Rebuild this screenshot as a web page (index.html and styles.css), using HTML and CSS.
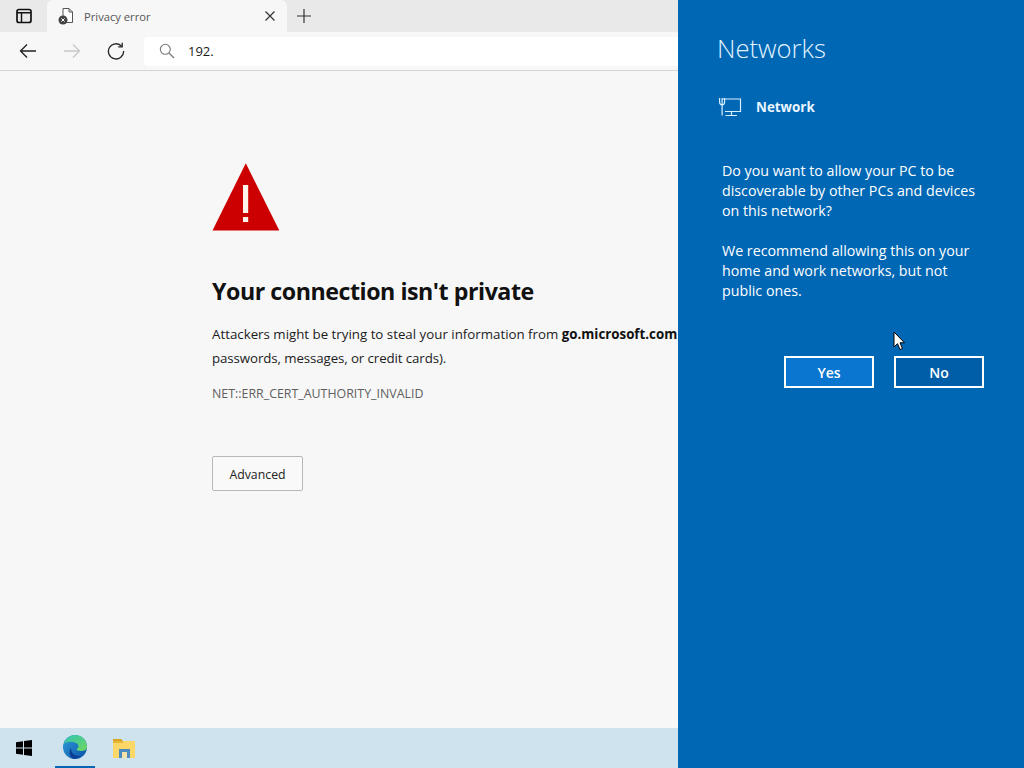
FILE: index.html
```html
<!DOCTYPE html>
<html lang="en">
<head>
<meta charset="utf-8">
<title>Privacy error</title>
<link rel="stylesheet" href="styles.css">
</head>
<body>
<div class="screen">
  <div class="browser">
    <div class="tabstrip">
      <div class="tab-actions">
        <svg class="ico" width="16" height="16" viewBox="0 0 16 16"><rect x="1" y="1.500" width="14" height="13" rx="2" fill="none" stroke="#111" stroke-width="1.700"/><path d="M1 4.800H15M5.500 4.800V14.500" stroke="#111" stroke-width="1.400" fill="none"/></svg>
      </div>
      <div class="tab">
        <svg class="favicon" width="16" height="18" viewBox="0 0 16 18"><path d="M5 1.500H11L14.500 5V15.500H5Z" fill="#fff" stroke="#555" stroke-width="1"/><path d="M11 1.500V5H14.500" fill="none" stroke="#555"/><circle cx="5" cy="13" r="4.500" fill="#444"/><path d="M3.400 11.400L6.600 14.600M6.600 11.400L3.400 14.600" stroke="#fff" stroke-width="1"/></svg>
        <span class="tab-title">Privacy error</span>
        <svg class="tab-close" width="10" height="10" viewBox="0 0 10 10"><path d="M0.500 0.500L9.500 9.500M9.500 0.500L0.500 9.500" stroke="#333" stroke-width="1.200"/></svg>
      </div>
      <svg class="newtab" width="16" height="16" viewBox="0 0 16 16"><path d="M8 1V15M1 8H15" stroke="#333" stroke-width="1.200"/></svg>
    </div>
    <div class="toolbar">
      <svg class="nav-back" width="18" height="16" viewBox="0 0 18 16"><path d="M17 8H1.500M8 1.500L1.500 8L8 14.500" fill="none" stroke="#222" stroke-width="1.300"/></svg>
      <svg class="nav-forward" width="18" height="16" viewBox="0 0 18 16"><path d="M1 8H16.500M10 1.500L16.500 8L10 14.500" fill="none" stroke="#c8c8c8" stroke-width="1.300"/></svg>
      <svg class="nav-reload" width="18" height="18" viewBox="0 0 18 18"><path d="M14.600 4.200A7.600 7.600 0 1 0 16.600 9" fill="none" stroke="#222" stroke-width="1.300"/><path d="M15.200 0.800V4.800H11.200" fill="none" stroke="#222" stroke-width="1.300"/></svg>
      <div class="address">
        <svg class="search" width="16" height="16" viewBox="0 0 16 16"><circle cx="6.300" cy="6.300" r="5" fill="none" stroke="#777" stroke-width="1.100"/><path d="M10 10L15 15" stroke="#777" stroke-width="1.200"/></svg>
        <span class="url">192.</span>
      </div>
    </div>
    <main class="content">
      <svg class="warn" width="68" height="68" viewBox="0 0 68 68"><path d="M33.800 0.300L67.300 67.500H0.500Z" fill="#cc0000"/><rect x="31" y="22" width="5.200" height="28" fill="#fff4ec"/><rect x="31" y="54" width="5.200" height="5" fill="#fff4ec"/></svg>
      <h1 class="heading">Your connection isn't private</h1>
      <p class="message">Attackers might be trying to steal your information from <b>go.microsoft.com</b><br><span class="message-tail">passwords, messages, or credit cards).</span></p>
      <p class="code">NET::ERR_CERT_AUTHORITY_INVALID</p>
      <button class="advanced">Advanced</button>
    </main>
    <div class="taskbar">
      <svg class="win" width="16" height="16" viewBox="0 0 16 16"><path d="M0 2.200L7 1.200V7.500H0ZM8 1L16 0V7.500H8ZM0 8.500H7V14.800L0 13.800ZM8 8.500H16V16L8 15Z" fill="#000"/></svg>
      <div class="task-item active">
        <svg width="26" height="26" viewBox="0 0 26 26"><defs><linearGradient id="eg" x1="0" y1="0" x2="1" y2="1"><stop offset="0" stop-color="#2f9fd8"/><stop offset="1" stop-color="#0b4fa8"/></linearGradient><linearGradient id="eg2" x1="0" y1="0" x2="1" y2="1"><stop offset="0" stop-color="#2fc4b0"/><stop offset="1" stop-color="#70d860"/></linearGradient></defs><circle cx="13" cy="13" r="12" fill="url(#eg)"/><path d="M2 10C4 3 10 1 13 1C20 1 25 6.500 25 13C25 16 22 17 19 17C16 17 14.500 16 14.500 15C17 14 17 11 15 9.500C11 7 5 7 2 10Z" fill="url(#eg2)"/><path d="M9 14C9 20 14 23 19 21.500C17 24 14 25 12 25C8 24 6 18 9 14Z" fill="#0a3f94"/></svg>
      </div>
      <div class="task-item">
        <svg width="24" height="20" viewBox="0 0 24 20"><path d="M1 1H9L11 3H1Z" fill="#d8a420"/><rect x="1" y="3" width="22" height="17" fill="#fbd768"/><rect x="1" y="3" width="10" height="2" fill="#e6b63a"/><rect x="7" y="11" width="11" height="9" fill="#4a8cc0"/><rect x="10" y="14" width="5" height="6" fill="#f3e3a8"/></svg>
      </div>
    </div>
  </div>
  <aside class="panel">
    <h2 class="panel-title">Networks</h2>
    <div class="net-row">
      <svg class="net-icon" width="23" height="19" viewBox="0 0 23 19"><path d="M0.600 0V4Q0.600 6.800 3.100 6.800T5.600 4V0M3.100 0V17.500M3.100 1H21.500V13.500H6M12.500 13.500V17.500M6.500 17.500H18" fill="none" stroke="#d8f0ff" stroke-width="1.200"/></svg>
      <span class="net-name">Network</span>
    </div>
    <p class="panel-text">Do you want to allow your PC to be discoverable by other PCs and devices on this network?</p>
    <p class="panel-text">We recommend allowing this on your home and work networks, but not public ones.</p>
    <div class="panel-actions">
      <button class="btn btn-yes">Yes</button>
      <button class="btn">No</button>
    </div>
    <svg class="cursor" width="13" height="20" viewBox="0 0 13 20"><path d="M1 1V16L4.500 12.700L7 18.500L9.500 17.500L7 11.800H11.500Z" fill="#fff" stroke="#000" stroke-width="1"/></svg>
  </aside>
</div>
</body>
</html>
```
FILE: styles.css
```css
* { box-sizing: border-box; }
html, body { margin: 0; padding: 0; }
body { font-family: "Open Sans", "Noto Sans", sans-serif; overflow: hidden; }
.screen { display: flex; width: 1024px; height: 768px; overflow: hidden; }

.browser { width: 678px; flex: none; display: flex; flex-direction: column; background: #f7f7f7; overflow: hidden; }

.tabstrip { height: 32px; flex: none; display: flex; align-items: flex-end; background: #e9e9e9; }
.tab-actions { width: 47px; height: 32px; flex: none; display: flex; align-items: center; justify-content: center; }
.tab { width: 240px; height: 32px; flex: none; display: flex; align-items: center; padding: 0 12px 0 11px; background: #f7f7f7; border-radius: 6px 6px 0 0; }
.favicon { flex: none; }
.tab-title { margin-left: 10px; font-size: 11.2px; color: #555; flex: 1; }
.tab-close { flex: none; }
.newtab { margin: 0 0 8px 9px; flex: none; }

.toolbar { height: 39px; flex: none; display: flex; align-items: center; background: #f7f7f7; border-bottom: 1px solid #d4d4d4; padding-left: 19px; }
.nav-back { flex: none; }
.nav-forward { flex: none; margin-left: 26px; }
.nav-reload { flex: none; margin-left: 26px; }
.address { flex: 1; height: 29px; margin-left: 19px; display: flex; align-items: center; background: #fff; padding-left: 15px; border-radius: 4px 0 0 4px; }
.url { margin-left: 13px; font-size: 13px; color: #1a1a1a; }

.content { flex: 1; padding: 92px 0 0 212px; min-height: 0; overflow: hidden; }
.warn { display: block; }
.heading { margin: 42px 0 0; width: 460px; font-size: 23.2px; line-height: 36px; font-weight: 700; letter-spacing: -0.46px; color: #111; white-space: nowrap; }
.message { margin: 13px 0 0; width: 466px; font-size: 13.3px; line-height: 24px; color: #1c1c1c; white-space: nowrap; }
.message b { font-weight: 700; color: #111; }
.message-tail { letter-spacing: -0.1px; }
.code { margin: 15px 0 0; font-size: 12.4px; line-height: 18px; color: #5f5f5f; }
.advanced { display: block; margin: 53px 0 0; width: 91px; height: 35px; padding: 1px 0 0; border: 1px solid #b8b8b8; border-radius: 2px; background: #f9f9f9; font: 12.3px "Open Sans", sans-serif; color: #222; }

.taskbar { height: 40px; flex: none; display: flex; align-items: center; background: #cfe3ee; padding-left: 16px; }
.win { flex: none; }
.task-item { width: 40px; height: 40px; flex: none; display: flex; align-items: center; justify-content: center; }
.task-item.active { margin-left: 23px; border-bottom: 2px solid #0a64b4; }
.task-item + .task-item { margin-left: 9px; }

.panel { position: relative; flex: 1; background: #0067b4; color: #fff; padding: 31px 40px 0 39px; }
.panel-title { margin: 0; font-size: 25.6px; line-height: 36px; font-weight: 300; color: #e2f3ff; }
.net-row { display: flex; align-items: center; margin-top: 24px; height: 32px; padding-left: 2px; }
.net-icon { flex: none; }
.net-name { margin-left: 14px; font-size: 13.4px; font-weight: 700; color: #eaf6ff; }
.panel-text { margin: 0 0 20px 5px; font-size: 14.25px; line-height: 20px; color: #fff; width: 262px; white-space: normal; }
.net-row + .panel-text { margin-top: 38px; }
.panel-actions { display: flex; gap: 20px; margin: 55px 0 0 67px; }
.btn { width: 90px; height: 32px; padding: 0; border: 2px solid #fff; background: #005ea8; color: #fff; font: 600 14px "Open Sans", sans-serif; }
.btn-yes { background: #0a76d0; }
.cursor { position: absolute; left: 215px; top: 331px; }
```
